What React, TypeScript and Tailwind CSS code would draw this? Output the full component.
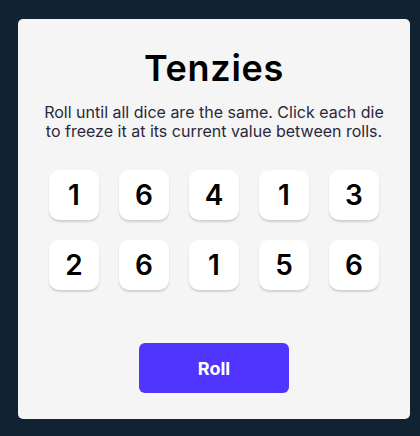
import React, { useState } from "react";

type Die = { id: number; value: number; held: boolean };

const START = [1, 6, 4, 1, 3, 2, 6, 1, 5, 6];

export default function App() {
  const [dice, setDice] = useState<Die[]>(
    START.map((v, i) => ({ id: i, value: v, held: false }))
  );

  const roll = () =>
    setDice((old) =>
      old.map((d) => (d.held ? d : { ...d, value: Math.ceil(Math.random() * 6) }))
    );

  const hold = (id: number) =>
    setDice((old) => old.map((d) => (d.id === id ? { ...d, held: !d.held } : d)));

  return (
    <div
      className="w-[420px] h-[436px] bg-[#112332] pt-[19px] pl-[18px]"
      style={{ fontFamily: "Inter, 'Noto Sans', sans-serif" }}
    >
      <main className="w-[392px] h-[400px] rounded-[5px] bg-[#f5f5f5] flex flex-col items-center pt-[31px]">
        <h1 className="text-[36px] leading-[36px] font-semibold text-black tracking-[0.02em]">Tenzies</h1>
        <p className="mt-[17px] text-[16px] leading-[19px] text-[#2b283a] text-center px-6">
          Roll until all dice are the same. Click each die to freeze it at its current value between rolls.
        </p>

        {/* dados */}
        <div className="mt-[29px] grid grid-cols-5 gap-5">
          {dice.map((d) => (
            <button
              key={d.id}
              onClick={() => hold(d.id)}
              className={`w-[50px] h-[50px] rounded-[10px] flex items-center justify-center text-[28px] font-semibold text-black shadow-[0_2px_2px_rgba(0,0,0,0.15)] ${
                d.held ? "bg-[#59e391]" : "bg-white"
              }`}
            >
              {d.value}
            </button>
          ))}
        </div>

        <button
          onClick={roll}
          className="mt-[53px] w-[150px] h-[50px] rounded-[6px] bg-[#5035ff] text-white text-[18px] font-bold"
        >
          Roll
        </button>
      </main>
    </div>
  );
}
